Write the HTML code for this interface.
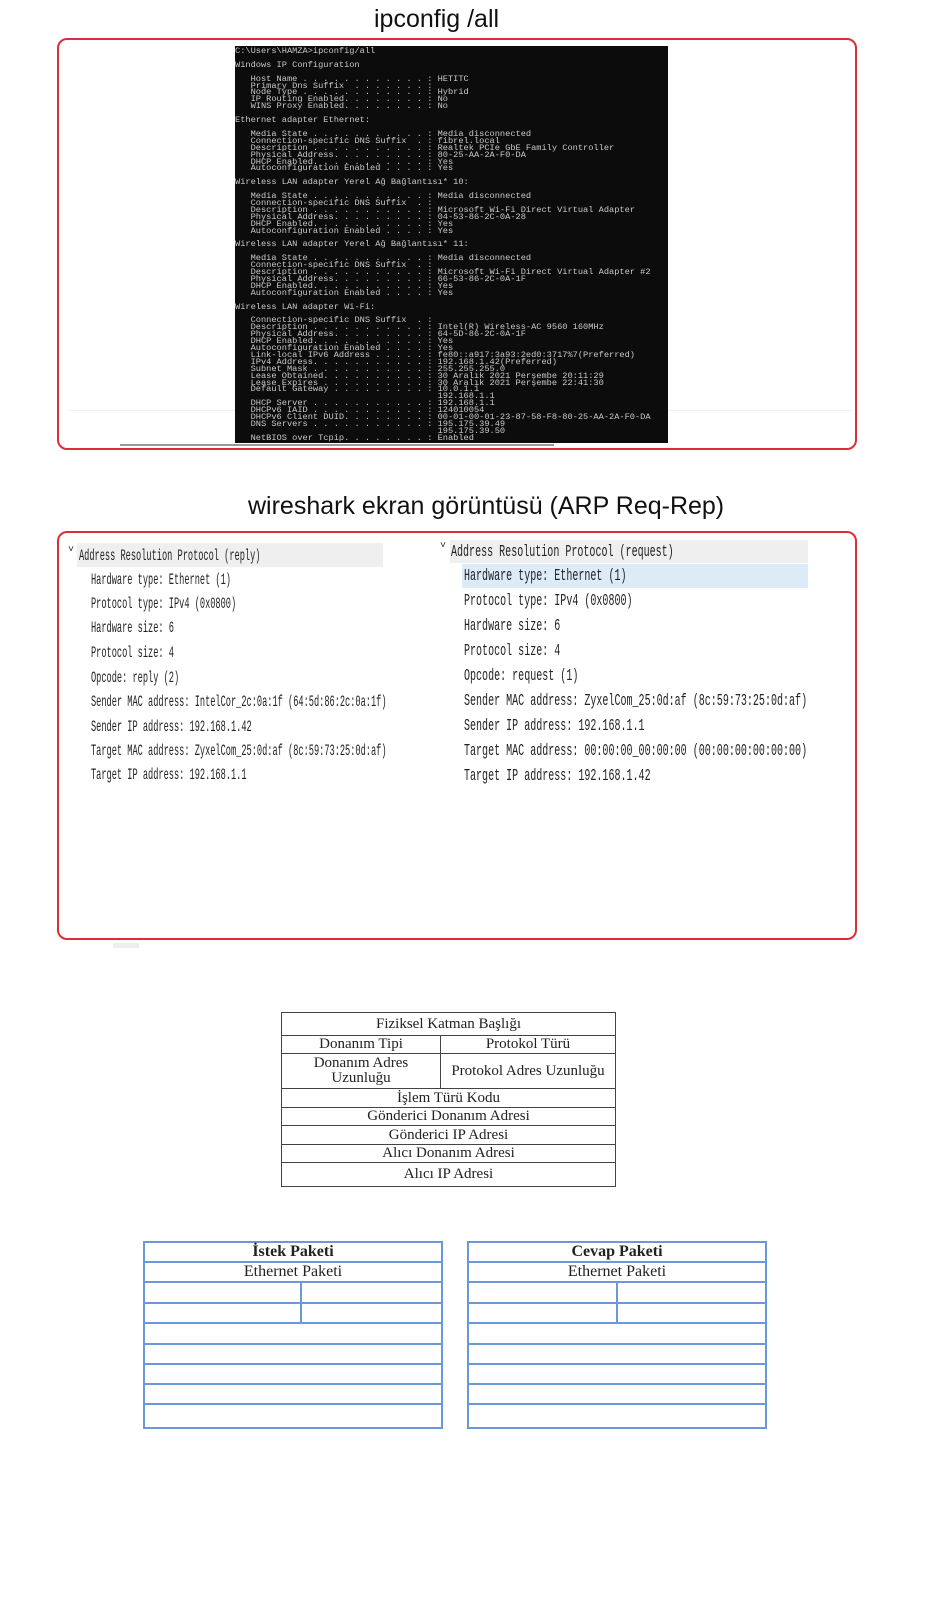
<!DOCTYPE html>
<html><head><meta charset="utf-8"><style>
*{margin:0;padding:0;box-sizing:border-box}
body{width:929px;height:1600px;background:#fff;position:relative;overflow:hidden;font-family:"Liberation Sans",sans-serif}
.abs{position:absolute}
.title{position:absolute;font-size:25px;color:#111;white-space:nowrap}
.rbox{position:absolute;border:2.5px solid #dc2e3a;border-radius:10px}
.term{position:absolute;left:235px;top:46px;width:433px;height:397px;background:#0c0c0c;overflow:hidden}
.term pre{font-family:"Liberation Mono",monospace;font-size:8.67px;line-height:6.9px;color:#c9c9c9;padding-top:2px;white-space:pre}
.ws{position:absolute;font-family:"Liberation Mono",monospace;color:#222;white-space:nowrap;transform-origin:0 50%}
.l{font-size:16px;transform:scaleX(0.54)}
.r{font-size:17px;transform:scaleX(0.59)}
table{border-collapse:collapse;position:absolute;font-family:"Liberation Serif",serif;color:#222}
.t1 td{border:1.5px solid #444;text-align:center;font-size:15px;line-height:15px}
.t2 td{border:2px solid #6b98d8;text-align:center;font-size:16px;line-height:16px}
</style></head><body>

<div class="title" style="left:374px;top:5px">ipconfig /all</div>
<div class="rbox" style="left:57px;top:38px;width:800px;height:412px"></div>
<div class="abs" style="left:68px;top:410px;width:785px;height:1px;background:#f0f0f0"></div>
<div class="abs" style="left:120px;top:444px;width:434px;height:2px;background:#999"></div>
<div class="term"><pre>C:\Users\HAMZA&gt;ipconfig/all

Windows IP Configuration

   Host Name . . . . . . . . . . . . : HETITC
   Primary Dns Suffix  . . . . . . . :
   Node Type . . . . . . . . . . . . : Hybrid
   IP Routing Enabled. . . . . . . . : No
   WINS Proxy Enabled. . . . . . . . : No

Ethernet adapter Ethernet:

   Media State . . . . . . . . . . . : Media disconnected
   Connection-specific DNS Suffix  . : fibrel.local
   Description . . . . . . . . . . . : Realtek PCIe GbE Family Controller
   Physical Address. . . . . . . . . : 80-25-AA-2A-F0-DA
   DHCP Enabled. . . . . . . . . . . : Yes
   Autoconfiguration Enabled . . . . : Yes

Wireless LAN adapter Yerel Ağ Bağlantısı* 10:

   Media State . . . . . . . . . . . : Media disconnected
   Connection-specific DNS Suffix  . :
   Description . . . . . . . . . . . : Microsoft Wi-Fi Direct Virtual Adapter
   Physical Address. . . . . . . . . : 04-53-86-2C-0A-28
   DHCP Enabled. . . . . . . . . . . : Yes
   Autoconfiguration Enabled . . . . : Yes

Wireless LAN adapter Yerel Ağ Bağlantısı* 11:

   Media State . . . . . . . . . . . : Media disconnected
   Connection-specific DNS Suffix  . :
   Description . . . . . . . . . . . : Microsoft Wi-Fi Direct Virtual Adapter #2
   Physical Address. . . . . . . . . : 66-53-86-2C-0A-1F
   DHCP Enabled. . . . . . . . . . . : Yes
   Autoconfiguration Enabled . . . . : Yes

Wireless LAN adapter Wi-Fi:

   Connection-specific DNS Suffix  . :
   Description . . . . . . . . . . . : Intel(R) Wireless-AC 9560 160MHz
   Physical Address. . . . . . . . . : 64-5D-86-2C-0A-1F
   DHCP Enabled. . . . . . . . . . . : Yes
   Autoconfiguration Enabled . . . . : Yes
   Link-local IPv6 Address . . . . . : fe80::a917:3a93:2ed0:3717%7(Preferred)
   IPv4 Address. . . . . . . . . . . : 192.168.1.42(Preferred)
   Subnet Mask . . . . . . . . . . . : 255.255.255.0
   Lease Obtained. . . . . . . . . . : 30 Aralık 2021 Perşembe 20:11:29
   Lease Expires . . . . . . . . . . : 30 Aralık 2021 Perşembe 22:41:30
   Default Gateway . . . . . . . . . : 10.0.1.1
                                       192.168.1.1
   DHCP Server . . . . . . . . . . . : 192.168.1.1
   DHCPv6 IAID . . . . . . . . . . . : 124010054
   DHCPv6 Client DUID. . . . . . . . : 00-01-00-01-23-87-58-F8-80-25-AA-2A-F0-DA
   DNS Servers . . . . . . . . . . . : 195.175.39.49
                                       195.175.39.50
   NetBIOS over Tcpip. . . . . . . . : Enabled</pre></div>

<div class="title" style="left:248px;top:492px">wireshark ekran görüntüsü (ARP Req-Rep)</div>
<div class="rbox" style="left:57px;top:531px;width:800px;height:409px"></div>

<div class="abs" style="left:77px;top:543px;width:306px;height:24px;background:#efefef"></div>
<div class="abs" style="left:450px;top:540px;width:358px;height:23px;background:#efefef"></div>
<div class="abs" style="left:462px;top:564px;width:346px;height:24px;background:#ddebf9"></div>

<div class="ws l" style="left:68px;top:545px;font-size:10px;transform:none">˅</div>
<div class="ws l" style="left:79px;top:547px">Address Resolution Protocol (reply)</div>
<div class="ws l" style="left:91px;top:571px">Hardware type: Ethernet (1)</div>
<div class="ws l" style="left:91px;top:595px">Protocol type: IPv4 (0x0800)</div>
<div class="ws l" style="left:91px;top:619px">Hardware size: 6</div>
<div class="ws l" style="left:91px;top:644px">Protocol size: 4</div>
<div class="ws l" style="left:91px;top:669px">Opcode: reply (2)</div>
<div class="ws l" style="left:91px;top:693px">Sender MAC address: IntelCor_2c:0a:1f (64:5d:86:2c:0a:1f)</div>
<div class="ws l" style="left:91px;top:718px">Sender IP address: 192.168.1.42</div>
<div class="ws l" style="left:91px;top:742px">Target MAC address: ZyxelCom_25:0d:af (8c:59:73:25:0d:af)</div>
<div class="ws l" style="left:91px;top:766px">Target IP address: 192.168.1.1</div>

<div class="ws r" style="left:440px;top:541px;font-size:10px;transform:none">˅</div>
<div class="ws r" style="left:451px;top:543px">Address Resolution Protocol (request)</div>
<div class="ws r" style="left:464px;top:567px">Hardware type: Ethernet (1)</div>
<div class="ws r" style="left:464px;top:592px">Protocol type: IPv4 (0x0800)</div>
<div class="ws r" style="left:464px;top:617px">Hardware size: 6</div>
<div class="ws r" style="left:464px;top:642px">Protocol size: 4</div>
<div class="ws r" style="left:464px;top:667px">Opcode: request (1)</div>
<div class="ws r" style="left:464px;top:692px">Sender MAC address: ZyxelCom_25:0d:af (8c:59:73:25:0d:af)</div>
<div class="ws r" style="left:464px;top:717px">Sender IP address: 192.168.1.1</div>
<div class="ws r" style="left:464px;top:742px">Target MAC address: 00:00:00_00:00:00 (00:00:00:00:00:00)</div>
<div class="ws r" style="left:464px;top:767px">Target IP address: 192.168.1.42</div>

<div class="abs" style="left:113px;top:943px;width:26px;height:5px;background:#eee"></div>

<table class="t1" style="left:281px;top:1012px;width:335px">
<tr style="height:23px"><td colspan="2">Fiziksel Katman Başlığı</td></tr>
<tr style="height:18px"><td style="width:159px">Donanım Tipi</td><td>Protokol Türü</td></tr>
<tr style="height:35px"><td>Donanım Adres<br>Uzunluğu</td><td>Protokol Adres Uzunluğu</td></tr>
<tr style="height:19px"><td colspan="2">İşlem Türü Kodu</td></tr>
<tr style="height:18px"><td colspan="2">Gönderici Donanım Adresi</td></tr>
<tr style="height:19px"><td colspan="2">Gönderici IP Adresi</td></tr>
<tr style="height:18px"><td colspan="2">Alıcı Donanım Adresi</td></tr>
<tr style="height:24px"><td colspan="2">Alıcı IP Adresi</td></tr>
</table>

<table class="t2" style="left:143px;top:1241px;width:300px">
<tr style="height:20px"><td colspan="2"><b>İstek Paketi</b></td></tr>
<tr style="height:20px"><td colspan="2">Ethernet Paketi</td></tr>
<tr style="height:21px"><td style="width:157px"></td><td></td></tr>
<tr style="height:20px"><td></td><td></td></tr>
<tr style="height:21px"><td colspan="2"></td></tr>
<tr style="height:20px"><td colspan="2"></td></tr>
<tr style="height:20px"><td colspan="2"></td></tr>
<tr style="height:20px"><td colspan="2"></td></tr>
<tr style="height:24px"><td colspan="2"></td></tr>
</table>

<table class="t2" style="left:467px;top:1241px;width:300px">
<tr style="height:20px"><td colspan="2"><b>Cevap Paketi</b></td></tr>
<tr style="height:20px"><td colspan="2">Ethernet Paketi</td></tr>
<tr style="height:21px"><td style="width:149px"></td><td></td></tr>
<tr style="height:20px"><td></td><td></td></tr>
<tr style="height:21px"><td colspan="2"></td></tr>
<tr style="height:20px"><td colspan="2"></td></tr>
<tr style="height:20px"><td colspan="2"></td></tr>
<tr style="height:20px"><td colspan="2"></td></tr>
<tr style="height:24px"><td colspan="2"></td></tr>
</table>

</body></html>
